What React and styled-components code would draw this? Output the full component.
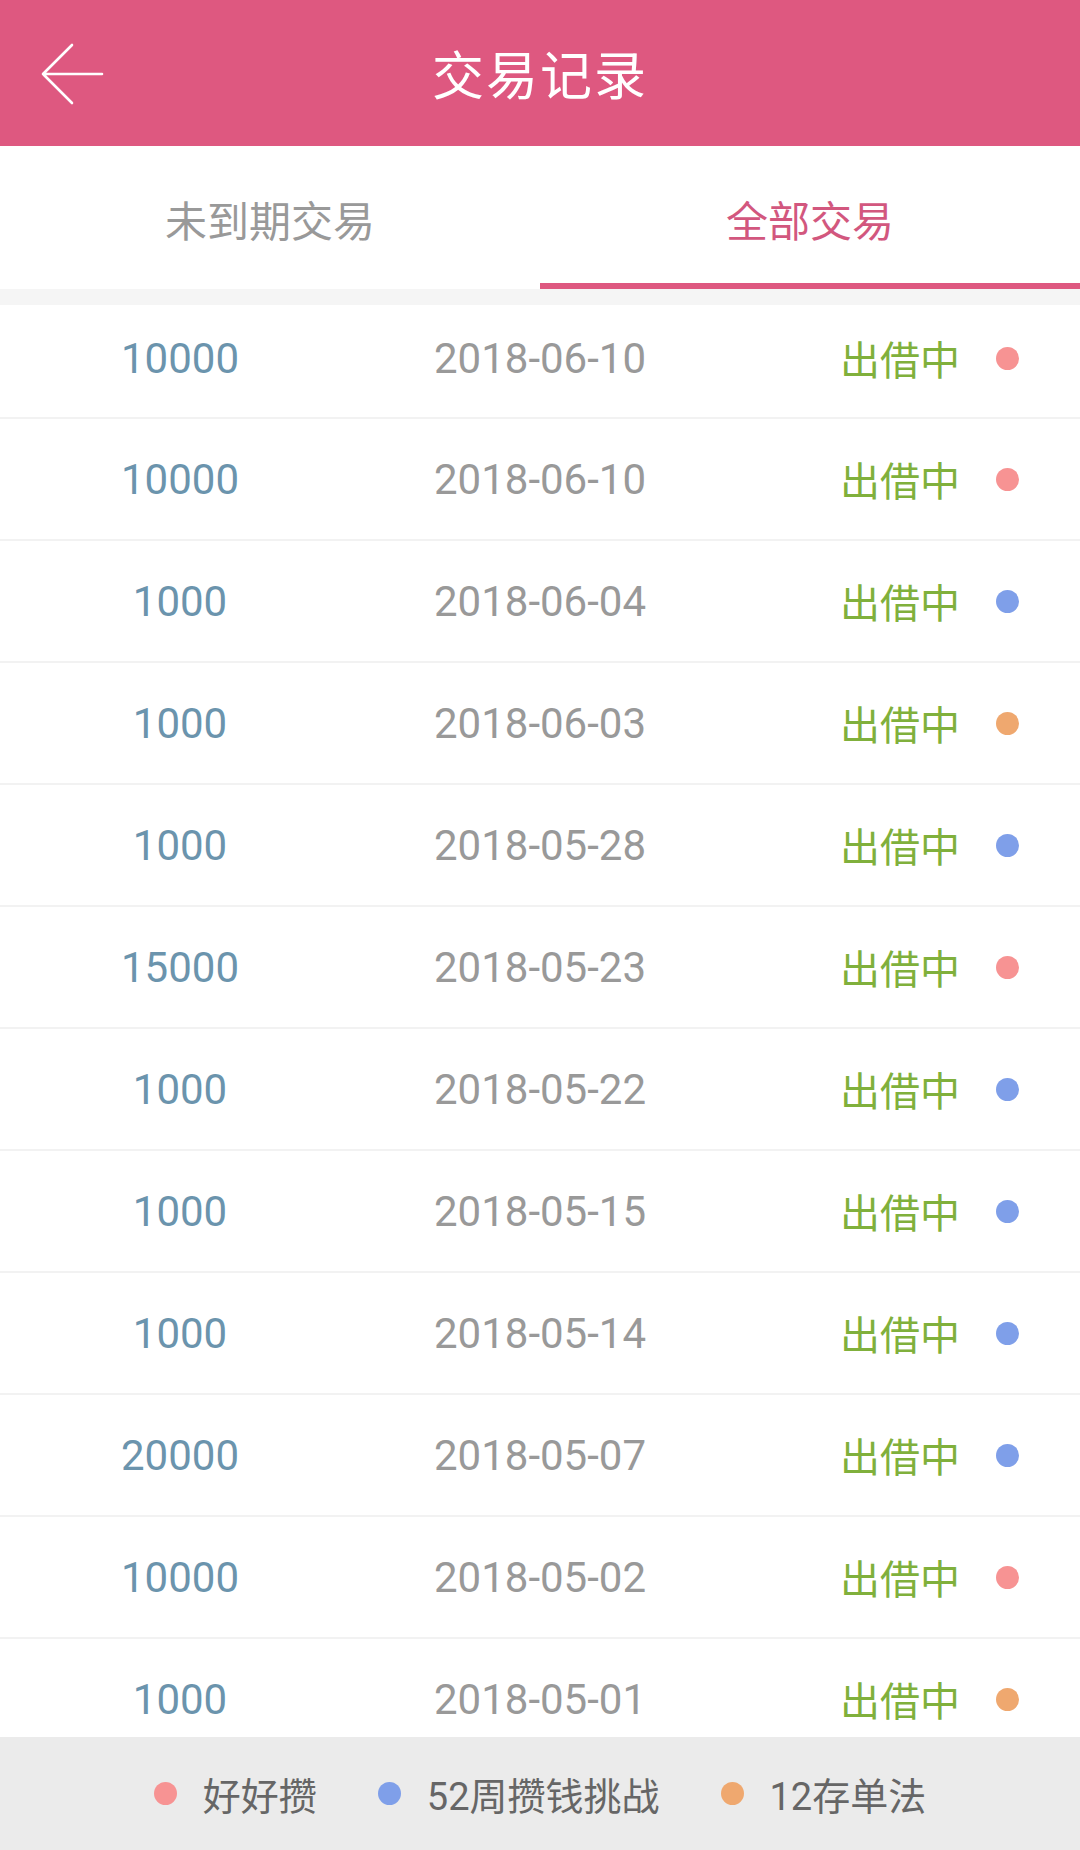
import React from "react";
import styled, { createGlobalStyle } from "styled-components";

const GlobalStyle = createGlobalStyle`
  html, body { margin: 0; padding: 0; background: #ffffff; }
  body { font-family: Roboto, "Noto Sans CJK SC", sans-serif; }
  * { box-sizing: border-box; }
`;

const Page = styled.div`
  width: 1080px;
  height: 1850px;
  display: flex;
  flex-direction: column;
  overflow: hidden;
  background: #ffffff;
`;

const Header = styled.header`
  height: 146px;
  flex: 0 0 146px;
  background: #de5880;
  display: grid;
  grid-template-columns: 146px 1fr 146px;
  align-items: center;
`;

const BackButton = styled.button`
  border: 0;
  background: transparent;
  padding: 0 0 0 40px;
  height: 100%;
  display: flex;
  align-items: center;
  cursor: pointer;
`;

const Title = styled.h1`
  margin: 0;
  text-align: center;
  color: #ffffff;
  font-family: "Noto Sans CJK SC", sans-serif;
  font-weight: 400;
  font-size: 52px;
  letter-spacing: 2px;
  line-height: 1;
`;

const Tabs = styled.nav`
  flex: 0 0 143px;
  display: grid;
  grid-template-columns: 1fr 1fr;
  background: #ffffff;
`;

const Tab = styled.div`
  display: flex;
  align-items: center;
  justify-content: center;
  padding-top: 8px;
  font-family: "Noto Sans CJK SC", sans-serif;
  font-size: 42px;
  color: ${(p) => (p.$active ? "#d2577e" : "#999999")};
  border-bottom: 6px solid ${(p) => (p.$active ? "#de5880" : "transparent")};
`;

const Gap = styled.div`
  flex: 0 0 16px;
  background: #f5f5f5;
`;

const List = styled.div`
  flex: 1 1 auto;
  overflow: hidden;
`;

const Row = styled.div`
  height: ${(p) => (p.$first ? "114px" : "122px")};
  padding-bottom: ${(p) => (p.$first ? "6px" : "0")};
  display: grid;
  grid-template-columns: 360px 360px 360px;
  align-items: center;
  border-bottom: 2px solid #f2f2f2;
`;

const Amount = styled.span`
  text-align: center;
  font-family: Roboto, sans-serif;
  font-size: 42px;
  color: #6b94ad;
`;

const DateText = styled.span`
  text-align: center;
  font-family: Roboto, sans-serif;
  font-size: 42px;
  color: #999999;
`;

const StatusCell = styled.div`
  display: flex;
  align-items: center;
  padding-left: 120px;
  gap: 36px;
`;

const Status = styled.span`
  font-family: "Noto Sans CJK SC", sans-serif;
  font-size: 40px;
  color: #80b03c;
`;

const Dot = styled.span`
  width: 23px;
  height: 23px;
  border-radius: 50%;
  flex: 0 0 23px;
  background: ${(p) => p.$color};
`;

const Footer = styled.footer`
  flex: 0 0 113px;
  background: #ebebeb;
  display: flex;
  align-items: center;
  justify-content: center;
  gap: 61px;
`;

const Legend = styled.div`
  display: flex;
  align-items: center;
  gap: 26px;
  font-family: Roboto, "Noto Sans CJK SC", sans-serif;
  font-size: 38px;
  color: #666666;
`;

const COLORS = {
  pink: "#f79393",
  blue: "#7f9fe9",
  orange: "#efa86f",
};

const rows = [
  ["10000", "2018-06-10", "pink"],
  ["10000", "2018-06-10", "pink"],
  ["1000", "2018-06-04", "blue"],
  ["1000", "2018-06-03", "orange"],
  ["1000", "2018-05-28", "blue"],
  ["15000", "2018-05-23", "pink"],
  ["1000", "2018-05-22", "blue"],
  ["1000", "2018-05-15", "blue"],
  ["1000", "2018-05-14", "blue"],
  ["20000", "2018-05-07", "blue"],
  ["10000", "2018-05-02", "pink"],
  ["1000", "2018-05-01", "orange"],
];

function BackArrow() {
  return (
    <svg width="64" height="64" viewBox="0 0 64 64" fill="none">
      <path
        d="M32 4 L3 33 L32 62 M3 33 L62 33"
        stroke="#ffffff"
        strokeWidth="2.6"
        strokeLinecap="round"
        strokeLinejoin="round"
      />
    </svg>
  );
}

export default function App() {
  return (
    <>
      <GlobalStyle />
      <Page>
        <Header>
          <BackButton aria-label="back">
            <BackArrow />
          </BackButton>
          <Title>交易记录</Title>
          <div />
        </Header>
        <Tabs>
          <Tab>未到期交易</Tab>
          <Tab $active>全部交易</Tab>
        </Tabs>
        <Gap />
        <List>
          {rows.map(([amt, date, c], i) => (
            <Row key={i} $first={i === 0}>
              <Amount>{amt}</Amount>
              <DateText>{date}</DateText>
              <StatusCell>
                <Status>出借中</Status>
                <Dot $color={COLORS[c]} />
              </StatusCell>
            </Row>
          ))}
        </List>
        <Footer>
          <Legend>
            <Dot $color={COLORS.pink} />
            <span>好好攒</span>
          </Legend>
          <Legend>
            <Dot $color={COLORS.blue} />
            <span>52周攒钱挑战</span>
          </Legend>
          <Legend>
            <Dot $color={COLORS.orange} />
            <span>12存单法</span>
          </Legend>
        </Footer>
      </Page>
    </>
  );
}
